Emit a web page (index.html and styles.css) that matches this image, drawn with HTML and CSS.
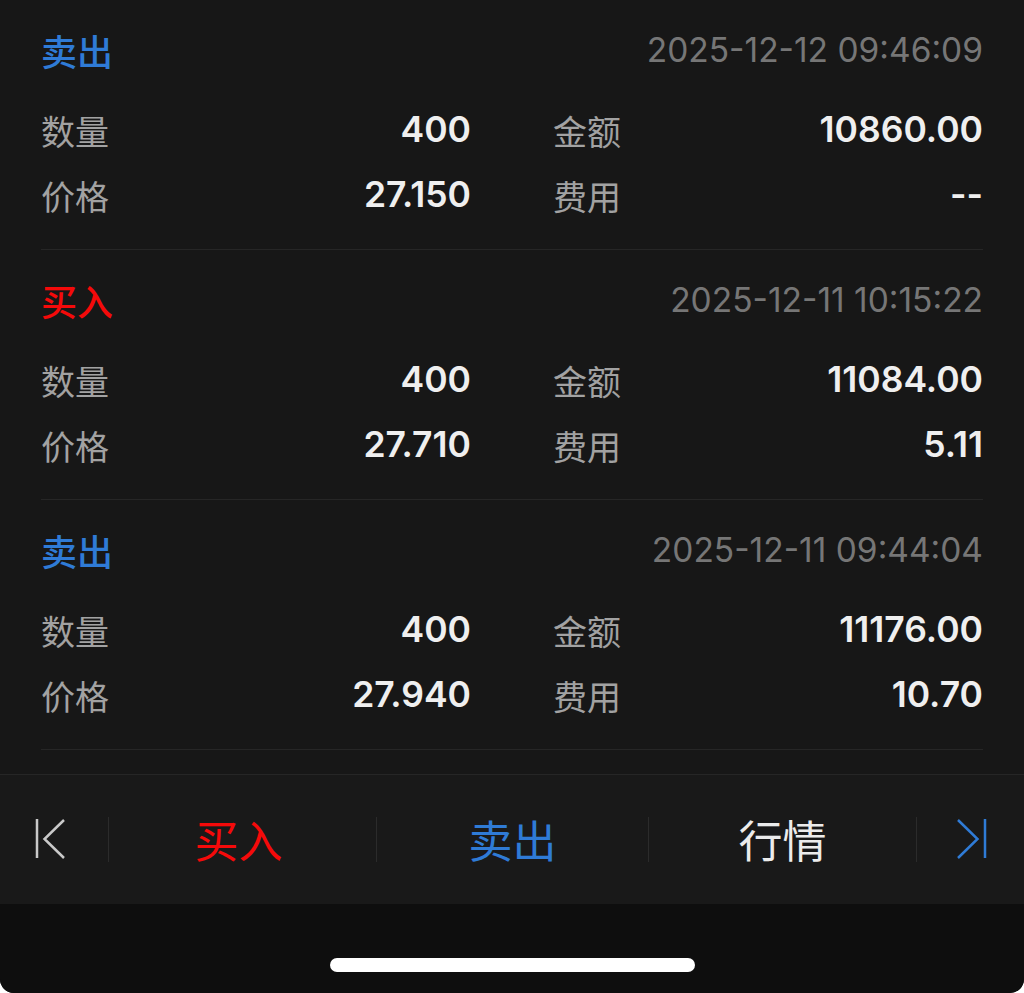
FILE: index.html
```html
<!DOCTYPE html>
<html lang="zh-CN">
<head>
  <meta charset="UTF-8" />
  <meta name="viewport" content="width=device-width, initial-scale=1.0" />
  <title>成交明细</title>
  <link rel="stylesheet" href="styles.css">
</head>
<body>

  <div class="list">
    <div class="record">
      <div class="record-head">
        <span class="side sell">卖出</span>
        <span class="time">2025-12-12 09:46:09</span>
      </div>
      <div class="grid">
        <span class="label">数量</span><span class="value">400</span>
        <span class="label">金额</span><span class="value">10860.00</span>
        <span class="label">价格</span><span class="value">27.150</span>
        <span class="label">费用</span><span class="value">--</span>
      </div>
    </div>

    <div class="record">
      <div class="record-head">
        <span class="side buy">买入</span>
        <span class="time">2025-12-11 10:15:22</span>
      </div>
      <div class="grid">
        <span class="label">数量</span><span class="value">400</span>
        <span class="label">金额</span><span class="value">11084.00</span>
        <span class="label">价格</span><span class="value">27.710</span>
        <span class="label">费用</span><span class="value">5.11</span>
      </div>
    </div>

    <div class="record">
      <div class="record-head">
        <span class="side sell">卖出</span>
        <span class="time">2025-12-11 09:44:04</span>
      </div>
      <div class="grid">
        <span class="label">数量</span><span class="value">400</span>
        <span class="label">金额</span><span class="value">11176.00</span>
        <span class="label">价格</span><span class="value">27.940</span>
        <span class="label">费用</span><span class="value">10.70</span>
      </div>
    </div>
  </div>

  <div class="toolbar">
    <div class="tool-icon first">
      <svg width="108" height="129" viewBox="0 0 108 129">
        <line x1="37" y1="44" x2="37" y2="83" stroke="#c9c9c9" stroke-width="2.5" />
        <polyline points="64,45 44.5,64 64,83" fill="none" stroke="#c9c9c9" stroke-width="2.5" />
      </svg>
    </div>
    <div class="sep"></div>
    <div class="tool buy">买入</div>
    <div class="sep"></div>
    <div class="tool sell mid">卖出</div>
    <div class="sep"></div>
    <div class="tool quote">行情</div>
    <div class="sep"></div>
    <div class="tool-icon last">
      <svg width="107" height="129" viewBox="0 0 107 129">
        <polyline points="41,45 60.5,64 41,83" fill="none" stroke="#2f7bd6" stroke-width="2.5" />
        <line x1="68" y1="44" x2="68" y2="83" stroke="#2f7bd6" stroke-width="2.5" />
      </svg>
    </div>
  </div>

  <div class="home-area">
    <div class="home-bar"></div>
  </div>

</body>
</html>
```

FILE: styles.css
```css
html {
  background: #ffffff;
}
body {
  margin: 0;
  height: 993px;
  display: flex;
  flex-direction: column;
  background: #171717;
  font-family: 'Inter', 'Noto Sans CJK SC', sans-serif;
  border-radius: 0 0 14px 14px;
  overflow: hidden;
}
.list {
  flex: 1;
  padding: 0 41px;
}
.record {
  padding: 22px 0 21px;
  border-bottom: 1px solid #262626;
}
.record-head {
  display: flex;
  justify-content: space-between;
  align-items: center;
  height: 56px;
  margin-bottom: 20px;
}
.side {
  font-family: 'Noto Sans CJK SC', sans-serif;
  font-size: 36px;
  font-weight: 500;
}
.sell {
  color: #2f7bd6;
}
.buy {
  color: #f50a0a;
}
.time {
  font-size: 33.5px;
  color: #767676;
}
.grid {
  display: grid;
  grid-template-columns: 120px 310px 202px 1fr;
  grid-auto-rows: 65px;
  align-items: center;
}
.label {
  font-family: 'Noto Sans CJK SC', sans-serif;
  font-size: 34px;
  color: #a2a2a2;
}
.grid .label:nth-child(4n+3) {
  padding-left: 82px;
}
.value {
  text-align: right;
  font-size: 35.5px;
  font-weight: 600;
  color: #efefef;
  margin-top: -2px;
}
.toolbar {
  height: 129px;
  border-top: 1px solid #262626;
  background: #191919;
  display: flex;
  align-items: center;
}
.tool-icon.first {
  width: 108px;
  height: 129px;
}
.tool-icon.last {
  width: 107px;
  height: 129px;
}
.tool-icon svg {
  display: block;
}
.sep {
  width: 1px;
  height: 45px;
  background: #2b2b2b;
}
.tool {
  width: 267px;
  text-align: center;
  font-family: 'Noto Sans CJK SC', sans-serif;
  font-size: 44px;
  line-height: 129px;
}
.tool.mid {
  width: 271px;
}
.tool.buy {
  text-indent: -8px;
}
.tool.quote {
  color: #ececec;
}
.home-area {
  height: 89px;
  background: #0e0e0e;
  display: flex;
  justify-content: center;
}
.home-bar {
  width: 365px;
  height: 14px;
  margin-top: 54px;
  border-radius: 7px;
  background: #ffffff;
}
```
